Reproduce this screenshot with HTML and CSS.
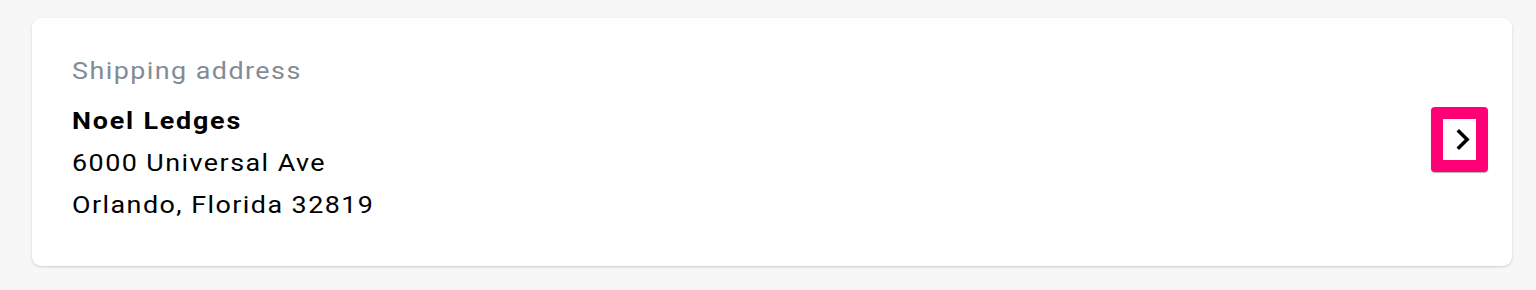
FILE: index.html
```html
<!DOCTYPE html>
<html>
<head>
<meta charset="utf-8">
<link rel="stylesheet" href="styles.css">
</head>
<body>
<div class="page">
  <section class="card">
    <div class="info">
      <div class="label">Shipping address</div>
      <div class="name">Noel Ledges</div>
      <div class="line">6000 Universal Ave</div>
      <div class="line">Orlando, Florida 32819</div>
    </div>
    <button class="go" aria-label="Edit shipping address">
      <svg width="15" height="23" viewBox="8.3 5.5 8.5 13"><path d="M8.59 16.59L13.17 12 8.59 7.41 10 6l6 6-6 6-1.41-1.41z" fill="#000"/></svg>
    </button>
  </section>
</div>
</body>
</html>
```
FILE: styles.css
```css
html, body {
  margin: 0;
  padding: 0;
  background: #f7f7f7;
}
.page {
  padding: 18px 24px 24px 32px;
  font-family: Roboto, "Liberation Sans", sans-serif;
}
.card {
  background: #fff;
  border-radius: 9px;
  box-shadow: 0 1px 3px rgba(0,0,0,0.12), 0 1px 2px rgba(0,0,0,0.06);
  height: 248px;
  box-sizing: border-box;
  padding: 0 24px 0 40px;
  display: flex;
  align-items: center;
  justify-content: space-between;
}
.info {
  align-self: flex-start;
  padding-top: 32px;
  transform: scaleX(1.12);
  transform-origin: left top;
}
.label {
  font-size: 24px;
  line-height: 42px;
  color: #828c96;
  letter-spacing: 1.3px;
  margin-bottom: 8px;
}
.name {
  font-size: 24px;
  font-weight: 700;
  line-height: 42px;
  color: #000;
  letter-spacing: 1.6px;
}
.line {
  font-size: 24px;
  line-height: 42px;
  color: #000;
  letter-spacing: 1.3px;
}
.go {
  width: 57px;
  height: 65px;
  margin-top: -5px;
  box-sizing: border-box;
  border: 12px solid #ff0077;
  border-radius: 4px;
  background: #fff;
  display: flex;
  align-items: center;
  justify-content: center;
  padding: 0;
  box-shadow: 0 1px 1px rgba(0,0,0,0.3);
}
.go svg {
  margin-left: 8px;
  flex: none;
}
```
